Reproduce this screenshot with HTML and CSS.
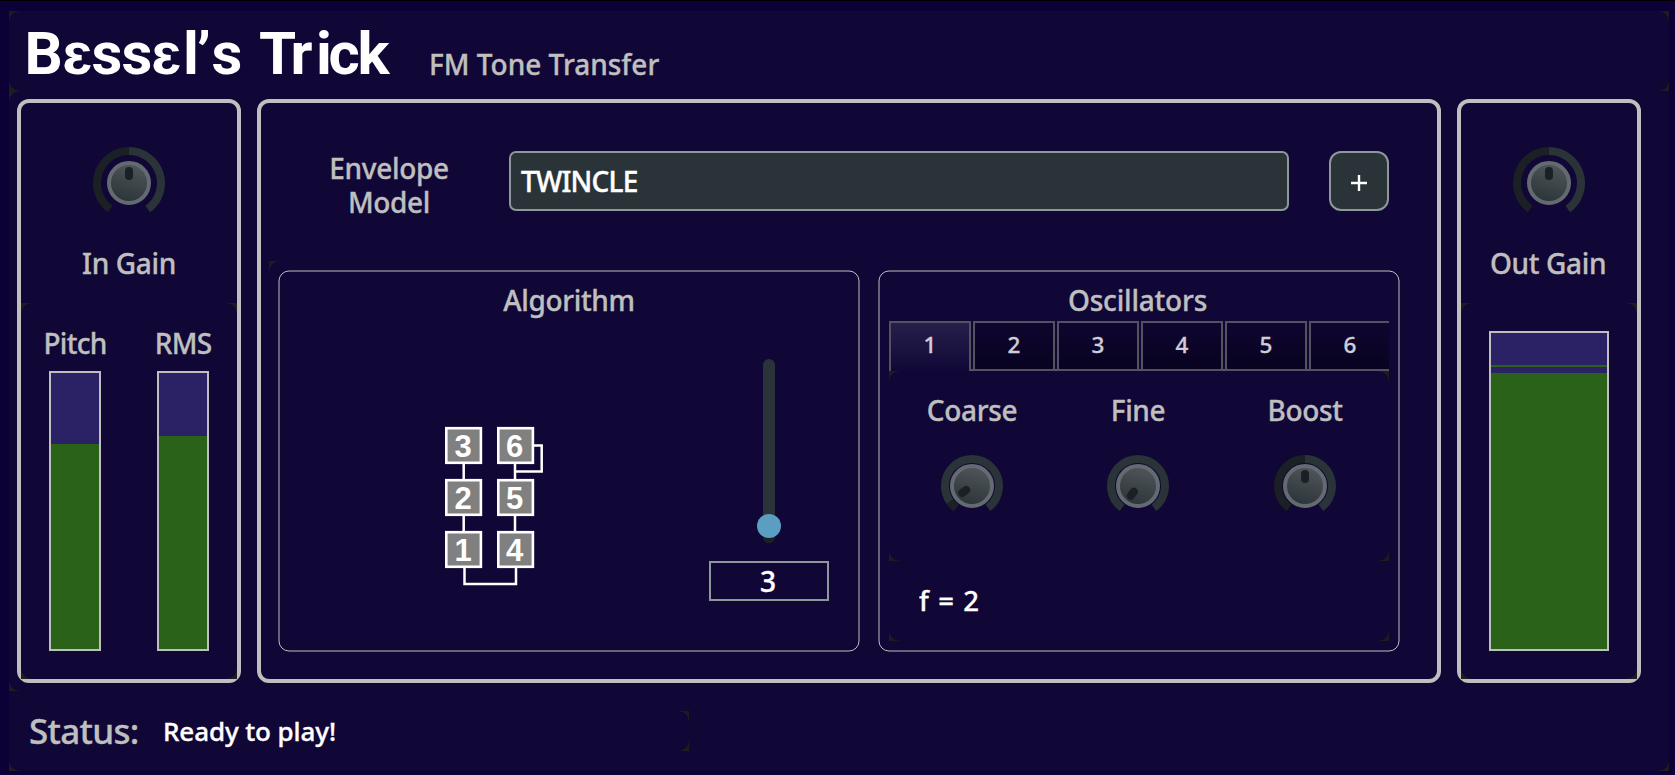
FILE: index.html
```html
<!DOCTYPE html>
<html lang="en"><head><meta charset="utf-8"><title>Bessel's Trick</title>
<link rel="stylesheet" href="styles.css"></head>
<body>
<svg class="defs" width="0" height="0"><defs>
<linearGradient id="kg" x1=".65" y1="0" x2=".35" y2="1"><stop offset="0" stop-color="#50575b"/><stop offset="1" stop-color="#2a3338"/></linearGradient>
<g id="cap"><circle r="20" fill="url(#kg)" stroke="#646b70" stroke-width="4"/></g>
<rect id="ptr" x="-4" y="-16" width="8" height="13" rx="4" fill="#1b2024"/>
</defs></svg>
<div class="plugin">
<header class="head notch">
<svg class="logo" width="380" height="60" role="img"><text y="52.5" x="15.5 53.5 82.5 112.5 142.5 174 188 202.5 227 250 281.5 307 319.5 348.5">Bɛssɛl’s Trick</text></svg>
<h2 class="tagline">FM Tone Transfer</h2>
</header>
<main class="main notch left">
<section class="card in">
<div class="gain">
<svg class="knob" width="76" height="76" viewBox="-38 -38 76 76"><path d="M-18.8 25.9A32 32 0 0 1 0-32" class="arc dark"/><path d="M0-32A32 32 0 0 1 18.8 25.9" class="arc"/><use href="#cap"/><use href="#ptr"/></svg>
<span class="label l-in">In Gain</span></div>
<div class="meters notch">
<div class="m"><span class="label l-pitch">Pitch</span><div class="meter"><div class="fill" style="height:205px"></div></div></div>
<div class="m"><span class="label l-rms">RMS</span><div class="meter"><div class="fill" style="height:213.5px"></div></div></div>
</div>
</section>
<section class="card center">
<div class="envelope">
<div class="l-env"><span class="label">Envelope</span><span class="label">Model</span></div>
<div class="select"><span>TWINCLE</span></div>
<button class="plus"><svg width="16" height="16"><path d="M8 0V16M0 8H16"/></svg></button>
</div>
<div class="panels">
<section class="panel algo">
<svg class="outline" width="582" height="382"><rect x="1" y="1" width="580" height="380" rx="10"/></svg>
<h3 class="label l-algo">Algorithm</h3>
<div class="algobody">
<svg class="diagram" width="102" height="162" viewBox="443 425 102 162">
<path class="wire" d="M463.7 464V479M463.7 516V531M515 464V479M515 516V531M464.5 568V584H516V568M534 445.5H541.7V471.5H515"/>
<g class="op"><rect x="446.3" y="428.2" width="34.6" height="34.6"/><rect x="498.3" y="428.2" width="34.6" height="34.6"/><rect x="446.3" y="480.2" width="34.6" height="34.6"/><rect x="498.3" y="480.2" width="34.6" height="34.6"/><rect x="446.3" y="532.2" width="34.6" height="34.6"/><rect x="498.3" y="532.2" width="34.6" height="34.6"/></g>
<g class="num"><text x="463" y="456.5">3</text><text x="514.5" y="456.5">6</text><text x="463" y="508.5">2</text><text x="514.5" y="508.5">5</text><text x="463" y="560.5">1</text><text x="514.5" y="560.5">4</text></g>
</svg>
<div class="slidercol">
<svg class="slider" width="24" height="188" viewBox="0 0 24 188"><path d="M12 7V179" stroke="#2a3338"/><path d="M12 166V179" stroke="#1b2024"/><circle cx="12" cy="168" r="12" fill="#5c9ec2"/></svg>
<div class="value">3</div>
</div>
</div>
</section>
<section class="panel osc">
<svg class="outline" width="522" height="382"><rect x="1" y="1" width="520" height="380" rx="10"/></svg>
<h3 class="label l-osc">Oscillators</h3>
<nav class="tabs"><a class="on">1</a><a>2</a><a>3</a><a>4</a><a>5</a><a class="cut">6</a></nav>
<div class="knobs notch">
<div class="k"><span class="label l-coarse">Coarse</span><svg class="knob" width="64" height="64" viewBox="-32 -32 64 64"><path d="M-15.9 21.8A27 27 0 1 1 15.9 21.8" class="arc"/><path d="M-15.9 21.8A27 27 0 0 1 -22.2 15.4" class="arc dark"/><use href="#cap"/><use href="#ptr" transform="rotate(235)"/></svg></div>
<div class="k"><span class="label l-fine">Fine</span><svg class="knob" width="64" height="64" viewBox="-32 -32 64 64"><path d="M-15.9 21.8A27 27 0 1 1 15.9 21.8" class="arc"/><use href="#cap"/><use href="#ptr" transform="rotate(216)"/></svg></div>
<div class="k"><span class="label l-boost">Boost</span><svg class="knob" width="64" height="64" viewBox="-32 -32 64 64"><path d="M-15.9 21.8A27 27 0 0 1 0-27" class="arc dark"/><path d="M0-27A27 27 0 0 1 15.9 21.8" class="arc"/><use href="#cap"/><use href="#ptr"/></svg></div>
</div>
<div class="freq notch bottom"><span>f = 2</span></div>
</section>
</div>
</section>
<section class="card out">
<div class="gain">
<svg class="knob" width="76" height="76" viewBox="-38 -38 76 76"><path d="M-18.8 25.9A32 32 0 0 1 0-32" class="arc dark"/><path d="M0-32A32 32 0 0 1 18.8 25.9" class="arc"/><use href="#cap"/><use href="#ptr"/></svg>
<span class="label l-out">Out Gain</span></div>
<div class="meters notch"><div class="meter wide"><div class="peak"></div><div class="fill" style="height:276px"></div></div></div>
</section>
</main>
<footer class="foot notch bottom">
<span class="label l-status">Status:</span><div class="ready notch right">Ready to play!</div>
</footer>
</div>
</body></html>
```
FILE: styles.css
```css
* { box-sizing: border-box; }
body { margin: 0; background: #0c0037; font-family: "Noto Sans", "Open Sans", sans-serif; font-weight: 500; overflow: hidden; }
.defs { position: absolute; }
.plugin { width: 1675px; height: 775px; border-top: 1px solid #000; padding: 10px 6px 4px 9px; }
/* panels with dark pixels left behind their rounded corners */
.notch {
  --tl: #1d1d1d; --tr: #1d1d1d; --bl: #1d1d1d; --br: #1d1d1d;
  background:
    radial-gradient(circle at 100% 100%, #100736 9.2px, var(--tl) 10px) 0 0 / 10px 10px no-repeat,
    radial-gradient(circle at 0 100%, #100736 9.2px, var(--tr) 10px) 100% 0 / 10px 10px no-repeat,
    radial-gradient(circle at 100% 0, #100736 9.2px, var(--bl) 10px) 0 100% / 10px 10px no-repeat,
    radial-gradient(circle at 0 0, #100736 9.2px, var(--br) 10px) 100% 100% / 10px 10px no-repeat,
    #100736;
}
.left { --tr: #100736; --br: #100736; }
.right { --tl: #100736; --bl: #100736; }
.bottom { --tl: #100736; --tr: #100736; }
.label { color: #bfbfbf; font-size: 28px; line-height: 34px; font-weight: 500; margin: 0; white-space: nowrap; letter-spacing: -.35px; -webkit-text-stroke: .35px #bfbfbf; }
.head { height: 80px; display: flex; align-items: flex-start; padding-top: 10px; }
.logo { flex: none; overflow: visible; }
.logo text { font: 700 60px Roboto, sans-serif; fill: #fff; }
.tagline { margin: 26px 0 0 40px; color: #bfbfbf; font-size: 28px; line-height: 34px; font-weight: 500; white-space: nowrap; -webkit-text-stroke: .35px #bfbfbf; }
.main { height: 600px; padding: 8px; display: flex; gap: 16px; }
.card { height: 584px; border: 4px solid #bfbfbf; border-radius: 12px; display: flex; flex-direction: column; flex: none; }
.in { width: 224px; }
.center { width: 1184px; }
.out { width: 184px; }
.gain { height: 200px; padding-top: 42px; display: flex; flex-direction: column; align-items: center; }
.gain .label { margin-top: 25px; }
.gain .l-out { margin-right: 2px; }
.arc { fill: none; stroke: #2a3338; stroke-width: 8; }
.arc.dark { stroke: #1b2024; }
.meters { height: 376px; display: flex; justify-content: center; align-items: flex-end; gap: 56px; padding-bottom: 28px; }
.m { width: 52px; display: flex; flex-direction: column; align-items: center; gap: 11px; }
.m .label { letter-spacing: -.7px; }
.meter { width: 52px; height: 280px; border: 2px solid #bfbfbf; background: #2b2265; display: flex; flex-direction: column; justify-content: flex-end; }
.meter.wide { width: 120px; height: 320px; }
.fill { background: #2a621a; }
.peak { height: 2px; background: #2a621a; margin-bottom: 6px; }
.envelope { height: 158px; padding: 48px 0 0 48px; display: flex; align-items: flex-start; }
.l-env { width: 160px; display: flex; flex-direction: column; align-items: center; }
.select { margin-left: 40px; width: 780px; height: 60px; background: #2a3338; border: 2px solid #8e979a; border-radius: 7px; color: #fff; font-size: 28px; line-height: 56px; padding-left: 10px; letter-spacing: -.8px; -webkit-text-stroke: .4px #fff; }
.plus { margin-left: 40px; width: 60px; height: 60px; background: #2a3338; border: 2px solid #8e979a; border-radius: 12px; padding: 3px 0 0; display: flex; align-items: center; justify-content: center; }
.plus path { stroke: #fff; stroke-width: 2.4; }
.panels { height: 418px; padding: 9px 0 0 9px; margin: 0 0 0 8px; display: flex; gap: 18px; background: radial-gradient(circle at 100% 100%, #100736 9.2px, #1d1d1d 10px) 0 0 / 10px 10px no-repeat; }
.panel { position: relative; height: 382px; display: flex; flex-direction: column; align-items: center; padding-top: 13px; }
.algo { width: 582px; }
.osc { width: 522px; }
.l-osc { letter-spacing: -.2px; margin-right: 3px; }
.outline { position: absolute; inset: 0; }
.outline rect { fill: none; stroke: #bfbfbf; }
.algobody { width: 582px; flex: 1; display: flex; padding-left: 165px; }
.diagram { margin-top: 108px; }
.wire { fill: none; stroke: #fff; stroke-width: 2.5; }
.op rect { fill: #808080; stroke: #fff; stroke-width: 2.6; }
.num text { font: 700 31px "Liberation Sans", sans-serif; fill: #fff; text-anchor: middle; }
.slidercol { width: 120px; margin: 41px 0 0 164px; display: flex; flex-direction: column; align-items: center; }
.slider path { stroke-width: 12; stroke-linecap: round; }
.value { width: 120px; height: 40px; margin-top: 15px; border: 2px solid #8e979a; color: #fff; text-align: center; font-size: 28px; line-height: 36px; padding-right: 2px; -webkit-text-stroke: .4px #fff; }
.tabs { width: 500px; height: 50px; margin-top: 4px; display: flex; overflow: hidden; background: linear-gradient(#595663, #595663) 80px 48px / 420px 2px no-repeat; gap: 2px; }
.tabs a { flex: none; width: 82px; border: 2px solid #55525f; background: linear-gradient(#0f0630, #080320); color: #cfcdd8; font-size: 22.5px; line-height: 44px; text-align: center; -webkit-text-stroke: .3px #cfcdd8; }
.tabs .on { border-bottom: 0; background: linear-gradient(#261f4a, #100736); }
.knobs { width: 500px; height: 190px; display: flex; padding-top: 22px; }
.k { width: 166px; display: flex; flex-direction: column; align-items: center; gap: 27px; }
.k:last-child { width: 168px; }
.freq { width: 500px; height: 80px; color: #fff; font-size: 27.5px; line-height: 80px; padding-left: 30px; word-spacing: 2.2px; -webkit-text-stroke: .3px #fff; }
.foot { height: 80px; padding-left: 20px; display: flex; align-items: center; }
.label.l-status { font-size: 35px; width: 126px; letter-spacing: -.7px; line-height: 44px; }
.ready { width: 534px; height: 40px; padding-left: 8px; color: #fff; font-size: 26px; line-height: 40px; letter-spacing: -.1px; -webkit-text-stroke: .35px #fff; }
```
